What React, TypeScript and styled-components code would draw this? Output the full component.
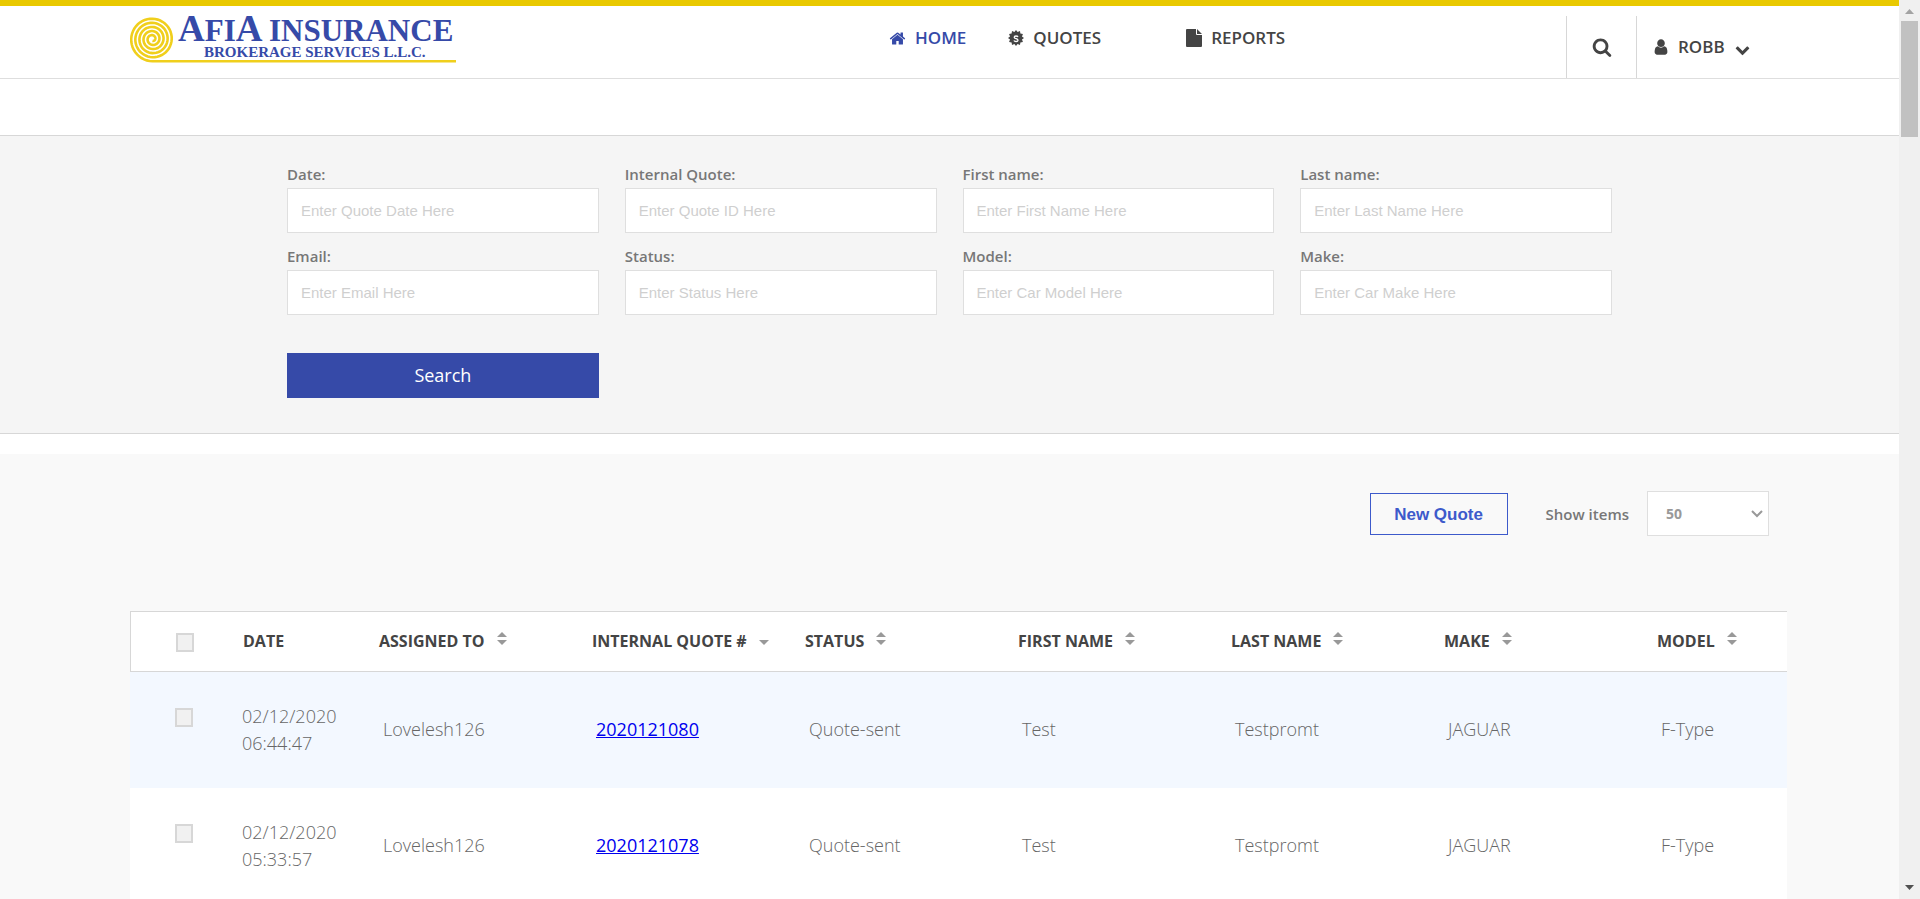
import React from "react";
import styled, { createGlobalStyle } from "styled-components";

const GlobalStyle = createGlobalStyle`
  *, *::before, *::after { box-sizing: border-box; }
  body { margin: 0; background: #fff; font-family: "Open Sans", sans-serif; color: #777; }
`;

const Shell = styled.div`
  display: flex;
  height: 100vh;
  overflow: hidden;
`;

const Page = styled.div`
  flex: 1;
  min-width: 0;
  overflow: hidden;
`;

/* ---------- header ---------- */

const Header = styled.header`
  display: flex;
  align-items: stretch;
  height: 79px;
  border-top: 6px solid #e9c900;
  border-bottom: 1px solid #dedede;
  padding: 0 149px 0 130px;
`;

const LogoLink = styled.a`
  display: block;
  flex: none;
`;

const Nav = styled.nav`
  display: flex;
  align-items: flex-start;
  margin-left: 431px;
  padding-top: 20px;
`;

const NavLink = styled.a<{ $active?: boolean; $gap?: number }>`
  display: flex;
  align-items: center;
  gap: 9px;
  height: 24px;
  margin-right: ${(p) => p.$gap ?? 0}px;
  color: ${(p) => (p.$active ? "#364aa8" : "#444")};
  font-size: 17px;
  font-weight: 600;
  line-height: 24px;
  text-decoration: none;
`;

const Account = styled.div`
  display: flex;
  margin: 10px 0 0 auto;
`;

const IconButton = styled.button`
  display: flex;
  align-items: center;
  justify-content: center;
  width: 71px;
  padding: 0;
  border: solid #d7d7d7;
  border-width: 0 1px;
  background: none;
  color: #444;
`;

const UserButton = styled.button`
  display: flex;
  align-items: center;
  gap: 10px;
  width: 113px;
  padding: 0 0 0 17px;
  border: 0;
  background: none;
  color: #444;
  font: 600 17px/24px "Open Sans", sans-serif;
  svg:last-child { margin-top: 4px; }
`;

/* ---------- filter form ---------- */

const Filters = styled.section`
  margin-top: 56px;
  padding: 28px 24px 35px;
  border: solid #d7d7d7;
  border-width: 1px 0;
  background: #f5f5f5;
`;

const FilterForm = styled.form`
  display: grid;
  grid-template-columns: repeat(4, 1fr);
  gap: 13px 26px;
  max-width: 1325px;
  margin: 0 auto;
`;

const Field = styled.label`
  display: block;
  font-size: 15px;
  font-weight: 600;
  line-height: 20px;
`;

const TextInput = styled.input`
  display: block;
  width: 100%;
  height: 45px;
  margin-top: 4px;
  padding: 0 13px;
  border: 1px solid #dfdfdf;
  border-radius: 0;
  background: #fff;
  color: #777;
  font: 15px "Liberation Sans", Arial, sans-serif;
  &::placeholder { color: #cfcfcf; }
`;

const SearchButton = styled.button`
  height: 45px;
  margin-top: 25px;
  padding: 0 0 2px;
  border: 0;
  background: #364aa8;
  color: #fff;
  font: 18px "Open Sans", sans-serif;
`;

/* ---------- list ---------- */

const Listing = styled.main`
  min-height: 600px;
  margin-top: 20px;
  padding: 37px 112px 0 130px;
  background: #f9f9f9;
`;

const Toolbar = styled.div`
  display: flex;
  align-items: center;
  justify-content: flex-end;
  margin-right: 18px;
`;

const NewQuote = styled.button`
  height: 42px;
  width: 138px;
  margin-right: 38px;
  padding: 2px 0 0;
  border: 1px solid #3d5acb;
  background: none;
  color: #3d5acb;
  font: bold 17px "Liberation Sans", Arial, sans-serif;
`;

const ShowItems = styled.label`
  display: flex;
  align-items: center;
  gap: 18px;
  font-size: 15px;
  font-weight: 600;
`;

const SelectBox = styled.span`
  position: relative;
  display: block;
  svg { position: absolute; right: 6px; top: 19px; pointer-events: none; }
`;

const Select = styled.select`
  display: block;
  appearance: none;
  width: 122px;
  height: 45px;
  padding: 0 18px;
  border: 1px solid #dfdfdf;
  border-radius: 0;
  background: #fff;
  color: #999;
  font: 700 14px "Open Sans", sans-serif;
`;

const TableClip = styled.div`
  overflow: hidden;
  margin-top: 75px;
`;

const Table = styled.table`
  width: calc(100% + 75px);
  table-layout: fixed;
  border-collapse: separate;
  border-spacing: 0;
  background: #fff;
`;

const Col = styled.col<{ $width?: number }>`
  width: ${(p) => (p.$width ? `${p.$width}px` : "auto")};
`;

const Th = styled.th`
  height: 61px;
  padding: 0 0 2px 8px;
  border: solid #d7d7d7;
  border-width: 1px 0;
  color: #444;
  font-size: 16px;
  font-weight: 700;
  text-align: left;
  white-space: nowrap;
  &:first-child { border-left-width: 1px; padding: 2px 0 0 45px; }
`;

const SortButton = styled.button`
  display: inline-flex;
  align-items: center;
  gap: 12px;
  padding: 0;
  border: 0;
  background: none;
  color: inherit;
  font: inherit;
`;

const SortIcon = styled.svg`
  display: block;
  margin-bottom: 4px;
  fill: #999;
`;

const Tr = styled.tr`
  height: 116px;
  background: #fff;
  &:nth-child(odd) { background: #f3f8ff; }
`;

const Td = styled.td<{ $top?: boolean }>`
  padding: ${(p) => (p.$top ? "36px 0 0 45px" : "0 0 2px 12px")};
  vertical-align: ${(p) => (p.$top ? "top" : "middle")};
  color: #666;
  font-size: 18px;
  font-weight: 300;
  line-height: 27px;
`;

const DateTd = styled(Td)`
  padding: 0 30px 0 7px;
`;

const QuoteLink = styled.a`
  color: #0000ee;
  font-weight: 400;
`;

const Checkbox = styled.input`
  appearance: none;
  display: block;
  width: 18px;
  height: 19px;
  margin: 0;
  border: 2px solid #d7d7d7;
  background: #f1f1f1;
`;

/* ---------- window scroll bar ---------- */

const ScrollTrack = styled.div`
  display: flex;
  flex-direction: column;
  flex: none;
  width: 21px;
  padding: 9px 2px;
  background: #f0f0f0;
  svg { display: block; flex: none; margin: 0 auto; }
`;

const ScrollThumb = styled.div`
  height: 116px;
  margin: 7px 0 auto;
  background: #c1c1c1;
`;

/* ---------- icons ---------- */

const Glyph = ({ d, size }: { d: string; size: number }) => (
  <svg width={size} height={size} viewBox="0 0 1792 1792" fill="currentColor" aria-hidden="true">
    <path d={d} />
  </svg>
);

const HOME =
  "M1472 992v480q0 26-19 45t-45 19h-384v-384h-256v384h-384q-26 0-45-19t-19-45v-480q0-1 .5-3t.5-3l575-474 575 474q1 2 1 6zm223-69l-62 74q-8 9-21 11h-3q-13 0-21-7l-692-577-692 577q-12 8-24 7-13-2-21-11l-62-74q-8-10-7-23.5t11-21.5l719-599q32-26 76-26t76 26l244 204v-195q0-14 9-23t23-9h192q14 0 23 9t9 23v408l219 182q10 8 11 21.5t-7 23.5z";
const SEARCH =
  "M1216 832q0-185-131.5-316.5t-316.5-131.5-316.5 131.5-131.5 316.5 131.5 316.5 316.5 131.5 316.5-131.5 131.5-316.5zm512 832q0 52-38 90t-90 38q-54 0-90-38l-343-342q-179 124-399 124-143 0-273.5-55.5t-225-150-150-225-55.5-273.5 55.5-273.5 150-225 225-150 273.5-55.5 273.5 55.5 225 150 150 225 55.5 273.5q0 220-124 399l343 343q37 37 37 90z";
const CHEVRON =
  "M1683 808l-742 741q-19 19-45 19t-45-19l-742-741q-19-19-19-45.5t19-45.5l166-165q19-19 45-19t45 19l531 531 531-531q19-19 45-19t45 19l166 165q19 19 19 45.5t-19 45.5z";

const UserIcon = () => (
  <svg width="14" height="16" viewBox="192 128 1408 1536" fill="currentColor" aria-hidden="true">
    <path d="M1536 1399q0 109-62.5 187t-150.5 78h-854q-88 0-150.5-78t-62.5-187q0-85 8.5-160.5t31.5-152 58.5-131 94-89 134.5-34.5q131 128 313 128t313-128q76 0 134.5 34.5t94 89 58.5 131 31.5 152 8.5 160.5zm-256-887q0 159-112.5 271.5t-271.5 112.5-271.5-112.5-112.5-271.5 112.5-271.5 271.5-112.5 271.5 112.5 112.5 271.5z" />
  </svg>
);

const FileIcon = () => (
  <svg width="16" height="18" viewBox="0 0 16 18" fill="currentColor" aria-hidden="true">
    <path d="M1 0h9v5q0 1 1 1h5v11q0 1-1 1H1q-1 0-1-1V1q0-1 1-1zM11 0l5 5h-5z" />
  </svg>
);

const badgePoints = Array.from({ length: 24 }, (_, i) => {
  const r = i % 2 ? 6.2 : 8;
  const a = (i * Math.PI) / 12;
  return `${(8 + r * Math.cos(a)).toFixed(2)},${(8 + r * Math.sin(a)).toFixed(2)}`;
}).join(" ");

const BadgeIcon = () => (
  <svg width="16" height="16" viewBox="0 0 16 16" aria-hidden="true">
    <polygon points={badgePoints} fill="currentColor" />
    <path
      d="M10 7Q9.500 6 8 6Q6.200 6 6.200 7.200Q6.200 8.200 8 8.600Q10 9 10 10.200Q10 11.500 8 11.500Q6.400 11.500 5.900 10.500"
      fill="none"
      stroke="#fff"
      strokeWidth="1.300"
    />
  </svg>
);

/* Winds outward and ends at the bottom, where it runs into the underline. */
const TURNS = 5;
const spiral = Array.from({ length: 241 }, (_, i) => {
  const t = (i / 240) * TURNS;
  const a = Math.PI / 2 + (TURNS - t) * 2 * Math.PI;
  const r = 1.8 + (t / TURNS) * 20.5;
  return `${i ? "L" : "M"}${(22.5 + r * Math.cos(a)).toFixed(2)} ${(33 + r * Math.sin(a)).toFixed(2)}`;
}).join("");

const Logo = () => (
  <svg width="328" height="66" viewBox="0 0 328 66" role="img" aria-label="Afia Insurance Brokerage Services L.L.C.">
    <path d={`${spiral}H326`} fill="none" stroke="#f0cf1c" strokeWidth="2.600" />
    <g fill="#364aa8" fontFamily="'Liberation Serif', 'Times New Roman', serif" fontWeight="700">
      <text x="48" y="35" fontSize="31">
        <tspan fontSize="37">A</tspan>FI<tspan fontSize="37">A</tspan>
      </text>
      <text x="139" y="35" fontSize="31">INSURANCE</text>
      <text x="74" y="51" fontSize="15">BROKERAGE SERVICES L.L.C.</text>
    </g>
  </svg>
);

/* ---------- data ---------- */

const fields = [
  ["Date:", "Enter Quote Date Here"],
  ["Internal Quote:", "Enter Quote ID Here"],
  ["First name:", "Enter First Name Here"],
  ["Last name:", "Enter Last Name Here"],
  ["Email:", "Enter Email Here"],
  ["Status:", "Enter Status Here"],
  ["Model:", "Enter Car Model Here"],
  ["Make:", "Enter Car Make Here"],
];

const columns = ["Assigned To", "Internal Quote #", "Status", "First Name", "Last Name", "Make", "Model"];

const quotes = [
  { date: "02/12/2020", time: "06:44:47", id: "2020121080" },
  { date: "02/12/2020", time: "05:33:57", id: "2020121078" },
].map((q) => ({
  ...q,
  assigned: "Lovelesh126",
  rest: ["Quote-sent", "Test", "Testpromt", "JAGUAR", "F-Type"],
}));

export default function App() {
  return (
    <>
      <GlobalStyle />
      <Shell>
        <Page>
          <Header>
            <LogoLink href="#">
              <Logo />
            </LogoLink>
            <Nav>
              <NavLink href="#" $active $gap={42}>
                <Glyph d={HOME} size={17} />
                HOME
              </NavLink>
              <NavLink href="#" $gap={85}>
                <BadgeIcon />
                QUOTES
              </NavLink>
              <NavLink href="#">
                <FileIcon />
                REPORTS
              </NavLink>
            </Nav>
            <Account>
              <IconButton type="button" aria-label="Search">
                <Glyph d={SEARCH} size={20} />
              </IconButton>
              <UserButton type="button">
                <UserIcon />
                ROBB
                <Glyph d={CHEVRON} size={15} />
              </UserButton>
            </Account>
          </Header>

          <Filters>
            <FilterForm>
              {fields.map(([label, hint]) => (
                <Field key={label}>
                  {label}
                  <TextInput type="text" placeholder={hint} />
                </Field>
              ))}
              <SearchButton type="button">Search</SearchButton>
            </FilterForm>
          </Filters>

          <Listing>
            <Toolbar>
              <NewQuote type="button">New Quote</NewQuote>
              <ShowItems>
                Show items
                <SelectBox>
                  <Select defaultValue="50">
                    <option>50</option>
                  </Select>
                  <svg width="12" height="8" viewBox="0 0 12 8" fill="none" stroke="#999" strokeWidth="2">
                    <path d="M1 1l5 5 5-5" />
                  </svg>
                </SelectBox>
              </ShowItems>
            </Toolbar>

            <TableClip>
              <Table>
                <colgroup>
                  <Col $width={105} />
                  <Col $width={136} />
                  {columns.map((c) => (
                    <Col key={c} />
                  ))}
                </colgroup>
                <thead>
                  <tr>
                    <Th>
                      <Checkbox type="checkbox" aria-label="Select all" />
                    </Th>
                    <Th>DATE</Th>
                    {columns.map((c) => (
                      <Th key={c}>
                        <SortButton type="button">
                          {c.toUpperCase()}
                          <SortIcon width="10" height="13" viewBox="0 0 10 13">
                            {c !== "Internal Quote #" && <path d="M5 0l5 5H0z" />}
                            <path d="M0 8h10l-5 5z" />
                          </SortIcon>
                        </SortButton>
                      </Th>
                    ))}
                  </tr>
                </thead>
                <tbody>
                  {quotes.map((q) => (
                    <Tr key={q.id}>
                      <Td $top>
                        <Checkbox type="checkbox" aria-label={`Select ${q.id}`} />
                      </Td>
                      <DateTd>
                        {q.date} {q.time}
                      </DateTd>
                      <Td>{q.assigned}</Td>
                      <Td>
                        <QuoteLink href="#">{q.id}</QuoteLink>
                      </Td>
                      {q.rest.map((v) => (
                        <Td key={v}>{v}</Td>
                      ))}
                    </Tr>
                  ))}
                </tbody>
              </Table>
            </TableClip>
          </Listing>
        </Page>

        <ScrollTrack aria-hidden="true">
          <svg width="9" height="5" viewBox="0 0 9 5" fill="#a3a3a3">
            <path d="M4.500 0L9 5H0z" />
          </svg>
          <ScrollThumb />
          <svg width="9" height="5" viewBox="0 0 9 5" fill="#505050">
            <path d="M0 0h9L4.500 5z" />
          </svg>
        </ScrollTrack>
      </Shell>
    </>
  );
}
